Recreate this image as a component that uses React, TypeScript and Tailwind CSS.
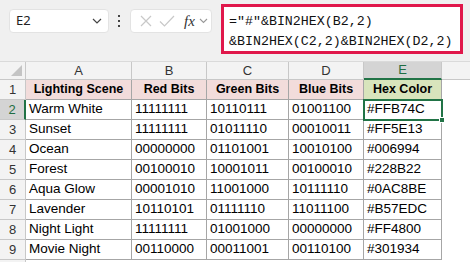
import React from "react";

const rows = [
  ["Warm White", "11111111", "10110111", "01001100", "#FFB74C"],
  ["Sunset", "11111111", "01011110", "00010011", "#FF5E13"],
  ["Ocean", "00000000", "01101001", "10010100", "#006994"],
  ["Forest", "00100010", "10001011", "00100010", "#228B22"],
  ["Aqua Glow", "00001010", "11001000", "10111110", "#0AC8BE"],
  ["Lavender", "10110101", "01111110", "11011100", "#B57EDC"],
  ["Night Light", "11111111", "01001000", "00000000", "#FF4800"],
  ["Movie Night", "00110000", "00011001", "00110100", "#301934"],
];

const colW = ["w-[106px]", "w-[75px]", "w-[82px]", "w-[75px]", "w-[78px]"];
const letters = ["A", "B", "C", "D", "E"];
const titles = ["Lighting Scene", "Red Bits", "Green Bits", "Blue Bits", "Hex Color"];

const Toolbar = () => (
  <div className="h-[61px] bg-[#f0f0f0] flex items-start relative">
    <div className="mt-[9px] ml-[9px] w-[100px] h-[24px] bg-white rounded-[4px] border border-[#e3e3e3] flex items-center justify-between pl-[6px] pr-[6px]">
      <span className="text-[13px] text-[#222] font-['Noto_Sans',sans-serif]">E2</span>
      <svg width="10" height="6" viewBox="0 0 10 6"><path d="M1 1l4 4 4-4" fill="none" stroke="#444" strokeWidth="1.2" /></svg>
    </div>
    <div className="mt-[15px] ml-[9px] w-[3px] flex flex-col gap-[3px]">
      <div className="w-[2px] h-[2px] bg-[#444]" />
      <div className="w-[2px] h-[2px] bg-[#444]" />
      <div className="w-[2px] h-[2px] bg-[#444]" />
    </div>
    <div className="mt-[9px] ml-[9px] w-[82px] h-[24px] bg-white rounded-[4px] border border-[#e3e3e3] flex items-center pl-[9px]">
      <svg width="12" height="12" viewBox="0 0 12 12"><path d="M1 1l10 10M11 1L1 11" stroke="#c8c8c8" strokeWidth="1.2" /></svg>
      <svg className="ml-[7px]" width="16" height="12" viewBox="0 0 16 12"><path d="M1 6.5l4.5 4.5L15 1" fill="none" stroke="#c8c8c8" strokeWidth="1.2" /></svg>
      <span className="ml-[9px] text-[15px] italic text-[#333] font-['Liberation_Serif',serif] leading-none">fx</span>
      <svg className="ml-[4px]" width="9" height="6" viewBox="0 0 9 6"><path d="M1 1l3.5 3.5L8 1" fill="none" stroke="#999" strokeWidth="1.1" /></svg>
    </div>
    <div className="mt-[4px] ml-[9px] w-[242px] h-[50px] bg-white border-[3px] border-[#e0184b] pl-[5px] pt-[5px] font-['Liberation_Mono',monospace] text-[13.3px] leading-[20px] text-[#111]">
      <div>="#"&amp;BIN2HEX(B2,2)</div>
      <div>&amp;BIN2HEX(C2,2)&amp;BIN2HEX(D2,2)</div>
    </div>
  </div>
);

const Sheet = () => (
  <div className="relative font-['Liberation_Sans',Arial,sans-serif] text-[13.5px] text-black">
    <div className="flex h-[19px] bg-[#f3f3f3] border-t border-[#dadada] text-[13px]">
      <div className="w-[26px] border-r border-b border-[#c8c8c8] relative">
        <svg className="absolute right-[3px] bottom-[3px]" width="11" height="11" viewBox="0 0 11 11"><path d="M11 0V11H0Z" fill="#c4c4c4" /></svg>
      </div>
      {letters.map((l, i) => (
        <div
          key={l}
          className={`${colW[i]} border-r flex items-center justify-center ${i === 4 ? "bg-[#d4d4d4] text-[#1f6e43] border-b-2 border-b-[#217346] border-r-[#c8c8c8]" : "text-[#333] border-b border-[#c8c8c8]"}`}
        >
          {l}
        </div>
      ))}
      <div className="flex-1 border-b border-[#c8c8c8]" />
    </div>
    <div className="flex h-[20px]">
      <div className="w-[26px] bg-[#f3f3f3] border-r border-b border-[#c8c8c8] flex items-center justify-center text-[#333] text-[13px]">1</div>
      {titles.map((t, i) => (
        <div
          key={t}
          className={`${colW[i]} border-r border-b border-[#a6a6a6] flex items-center justify-center font-bold text-[12.5px] ${i === 4 ? "bg-[#d8e4bc]" : "bg-[#f2dcdb]"}`}
        >
          {t}
        </div>
      ))}
    </div>
    {rows.map((r, ri) => (
      <div key={ri} className="flex h-[20px]">
        <div
          className={`w-[26px] border-b border-[#c8c8c8] flex items-center justify-center text-[13px] ${ri === 0 ? "bg-[#d4d4d4] text-[#1f6e43] border-r-2 border-r-[#217346]" : "bg-[#f3f3f3] text-[#333] border-r border-r-[#c8c8c8]"}`}
        >
          {ri + 2}
        </div>
        {r.map((c, ci) => (
          <div key={ci} className={`${colW[ci]} border-r border-b border-[#a6a6a6] bg-white flex items-center pl-[3px]`}>
            {c}
          </div>
        ))}
      </div>
    ))}
    <div className="flex h-[20px]">
      <div className="w-[26px] bg-[#f3f3f3] border-r border-[#c8c8c8]" />
    </div>
    <div className="absolute left-[363px] top-[38px] w-[80px] h-[22px] border-2 border-[#217346]" />
    <div className="absolute left-[439px] top-[56px] w-[6px] h-[6px] bg-[#217346] border border-white" />
  </div>
);

const App = () => (
  <div className="w-[470px] h-[262px] overflow-hidden bg-white">
    <Toolbar />
    <Sheet />
  </div>
);

export default App;
